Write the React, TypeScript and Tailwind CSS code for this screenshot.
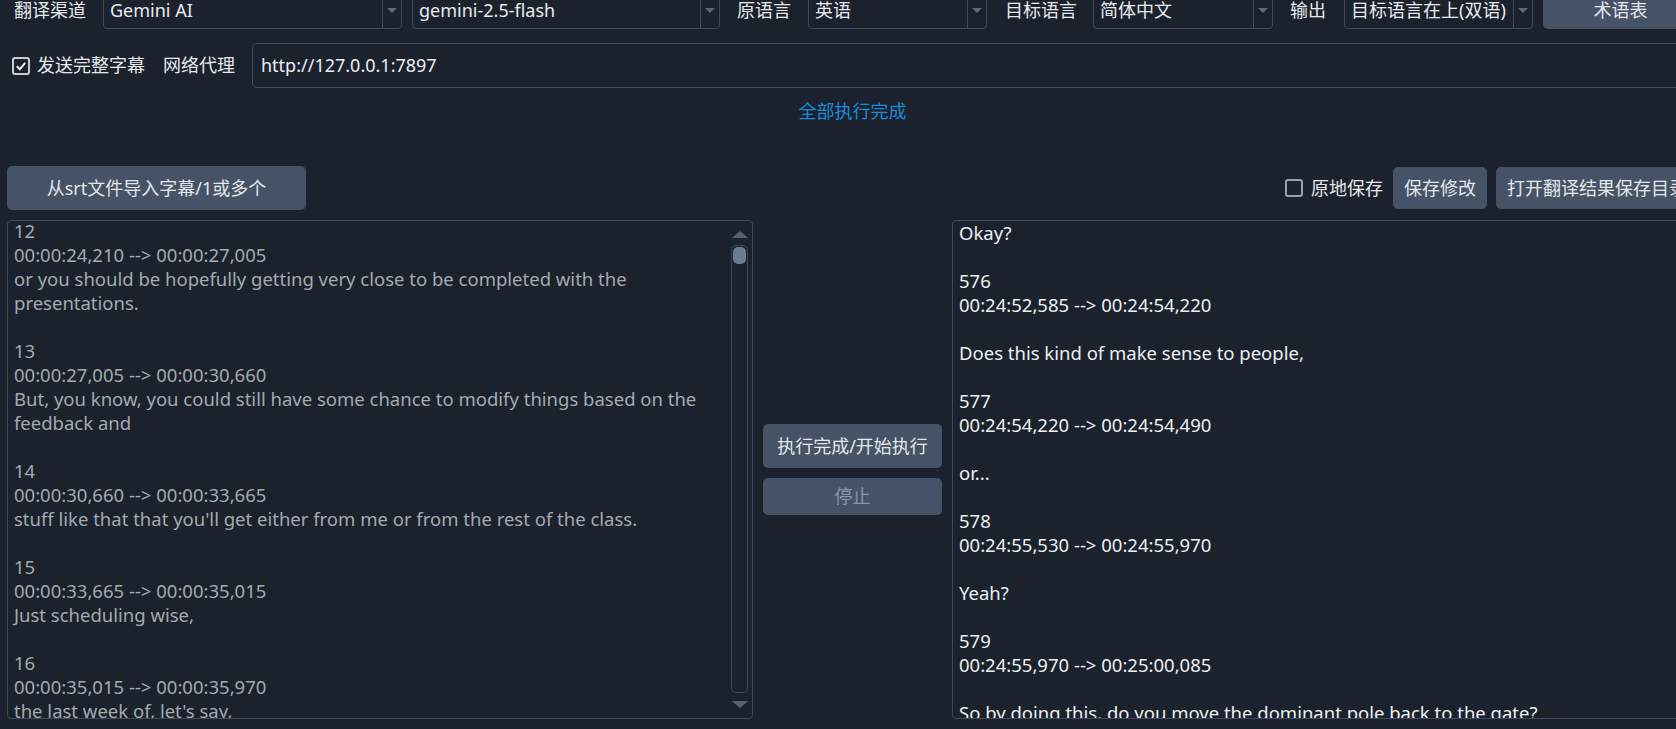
import React from "react";

const FONT = "font-['Noto_Sans','Noto_Sans_CJK_SC',sans-serif]";

const leftLines = [
  "12",
  "00:00:24,210 --> 00:00:27,005",
  "or you should be hopefully getting very close to be completed with the",
  "presentations.",
  "",
  "13",
  "00:00:27,005 --> 00:00:30,660",
  "But, you know, you could still have some chance to modify things based on the",
  "feedback and",
  "",
  "14",
  "00:00:30,660 --> 00:00:33,665",
  "stuff like that that you'll get either from me or from the rest of the class.",
  "",
  "15",
  "00:00:33,665 --> 00:00:35,015",
  "Just scheduling wise,",
  "",
  "16",
  "00:00:35,015 --> 00:00:35,970",
  "the last week of, let's say,",
];

const rightLines = [
  "Okay?",
  "",
  "576",
  "00:24:52,585 --> 00:24:54,220",
  "",
  "Does this kind of make sense to people,",
  "",
  "577",
  "00:24:54,220 --> 00:24:54,490",
  "",
  "or...",
  "",
  "578",
  "00:24:55,530 --> 00:24:55,970",
  "",
  "Yeah?",
  "",
  "579",
  "00:24:55,970 --> 00:25:00,085",
  "",
  "So by doing this, do you move the dominant pole back to the gate?",
];

function Select({ value, className }: { value: string; className: string }) {
  return (
    <div
      className={`flex h-[37px] shrink-0 rounded-[4px] border border-[#3e4959] ${className}`}
    >
      <div className="flex flex-1 items-center overflow-hidden whitespace-nowrap pl-[6px] text-[#e8eaee]">
        {value}
      </div>
      <div className="flex w-[19px] items-center justify-center border-l border-[#3e4959]">
        <div className="h-0 w-0 border-x-[5px] border-t-[5px] border-x-transparent border-t-[#5d6878]" />
      </div>
    </div>
  );
}

function Label({ text, className }: { text: string; className: string }) {
  return (
    <div className={`shrink-0 whitespace-nowrap text-[#e6e8ec] ${className}`}>{text}</div>
  );
}

function Lines({ lines, color }: { lines: string[]; color: string }) {
  return (
    <div className={`flex flex-col text-[18.5px] leading-[24px] ${color}`}>
      {lines.map((l, i) =>
        l === "" ? (
          <div key={i} className="h-[24px]" />
        ) : (
          <div key={i} className="h-[24px] whitespace-pre">
            {l}
          </div>
        )
      )}
    </div>
  );
}

export default function App() {
  return (
    <div className={`h-[729px] w-[1676px] overflow-hidden bg-[#1b222d] text-[18px] ${FONT}`}>
      <div className="flex w-[1705px] flex-col">
        {/* Row 1 */}
        <div className="mt-[-8px] flex h-[37px] items-center">
          <Label text="翻译渠道" className="ml-[14px]" />
          <Select value="Gemini AI" className="ml-[17px] w-[299px]" />
          <Select value="gemini-2.5-flash" className="ml-[10px] w-[308px]" />
          <Label text="原语言" className="ml-[17px]" />
          <Select value="英语" className="ml-[17px] w-[179px]" />
          <Label text="目标语言" className="ml-[18px]" />
          <Select value="简体中文" className="ml-[16px] w-[180px]" />
          <Label text="输出" className="ml-[17px]" />
          <Select value="目标语言在上(双语)" className="ml-[18px] w-[189px]" />
          <div className="ml-[10px] mr-[7px] flex h-[37px] flex-1 items-center justify-center rounded-[5px] bg-[#465366] text-[#e3e6ea]">
            术语表
          </div>
        </div>

        {/* Row 2 */}
        <div className="mt-[14px] flex h-[45px] items-center">
          <div className="ml-[12px] flex h-[18px] w-[18px] items-center justify-center rounded-[3px] border-2 border-[#c9cdd3]">
            <svg width="12" height="12" viewBox="0 0 12 12">
              <path d="M1.8 6.2 L4.8 9.2 L10.2 2.8" fill="none" stroke="#eef0f3" strokeWidth="2" />
            </svg>
          </div>
          <Label text="发送完整字幕" className="ml-[7px]" />
          <Label text="网络代理" className="ml-[18px]" />
          <div className="ml-[17px] mr-[7px] flex h-[45px] flex-1 items-center rounded-[5px] border border-[#3e4959] pl-[8px] text-[#eceef1]">
            http://127.0.0.1:7897
          </div>
        </div>

        {/* Row 3 */}
        <div className="mt-[11px] h-[24px] text-center leading-[24px] text-[#1a8bd8]">
          全部执行完成
        </div>

        {/* Row 4 */}
        <div className="mt-[43px] flex h-[44px] items-center justify-between px-[7px]">
          <div className="flex h-[44px] w-[299px] items-center justify-center rounded-[5px] bg-[#465366] text-[#e3e6ea]">
            从srt文件导入字幕/1或多个
          </div>
          <div className="flex items-center">
            <div className="h-[18px] w-[18px] rounded-[3px] border-2 border-[#9aa1aa]" />
            <div className="ml-[8px] text-[#e6e8ec]">原地保存</div>
            <div className="ml-[10px] flex h-[42px] items-center rounded-[5px] bg-[#465366] px-[11px] text-[#e3e6ea]">
              保存修改
            </div>
            <div className="ml-[9px] flex h-[42px] items-center whitespace-nowrap rounded-[5px] bg-[#465366] px-[11px] text-[#e3e6ea]">
              打开翻译结果保存目录
            </div>
          </div>
        </div>

        {/* Row 5 */}
        <div className="mt-[10px] flex h-[499px] px-[7px]">
          <div className="flex h-full w-[746px] shrink-0 overflow-hidden rounded-[4px] border border-[#3e4959]">
            <div className="mt-[-2px] flex-1 overflow-hidden pl-[6px]">
              <Lines lines={leftLines} color="text-[#a4a9b0]" />
            </div>
            <div className="mr-[4px] flex w-[17px] flex-col items-center pb-[10px] pt-[10px]">
              <div className="h-0 w-0 border-x-[8px] border-b-[7px] border-x-transparent border-b-[#566273]" />
              <div className="mt-[7px] w-[17px] flex-1 rounded-[5px] border border-[#3b4757] p-[1px]">
                <div className="h-[17px] w-full rounded-[5px] bg-[#6b7c90]" />
              </div>
              <div className="mt-[8px] h-0 w-0 border-x-[8px] border-t-[7px] border-x-transparent border-t-[#566273]" />
            </div>
          </div>

          <div className="flex w-[199px] shrink-0 flex-col items-center justify-center gap-[10px]">
            <div className="flex h-[44px] w-[179px] items-center justify-center rounded-[5px] bg-[#465366] text-[#e3e6ea]">
              执行完成/开始执行
            </div>
            <div className="flex h-[37px] w-[179px] items-center justify-center rounded-[5px] bg-[#465366] text-[#8c96a4]">
              停止
            </div>
          </div>

          <div className="flex h-full w-[746px] shrink-0 overflow-hidden rounded-[4px] border border-[#3e4959]">
            <div className="flex-1 overflow-hidden pl-[6px]">
              <Lines lines={rightLines} color="text-[#eceef1]" />
            </div>
          </div>
        </div>
      </div>
    </div>
  );
}
